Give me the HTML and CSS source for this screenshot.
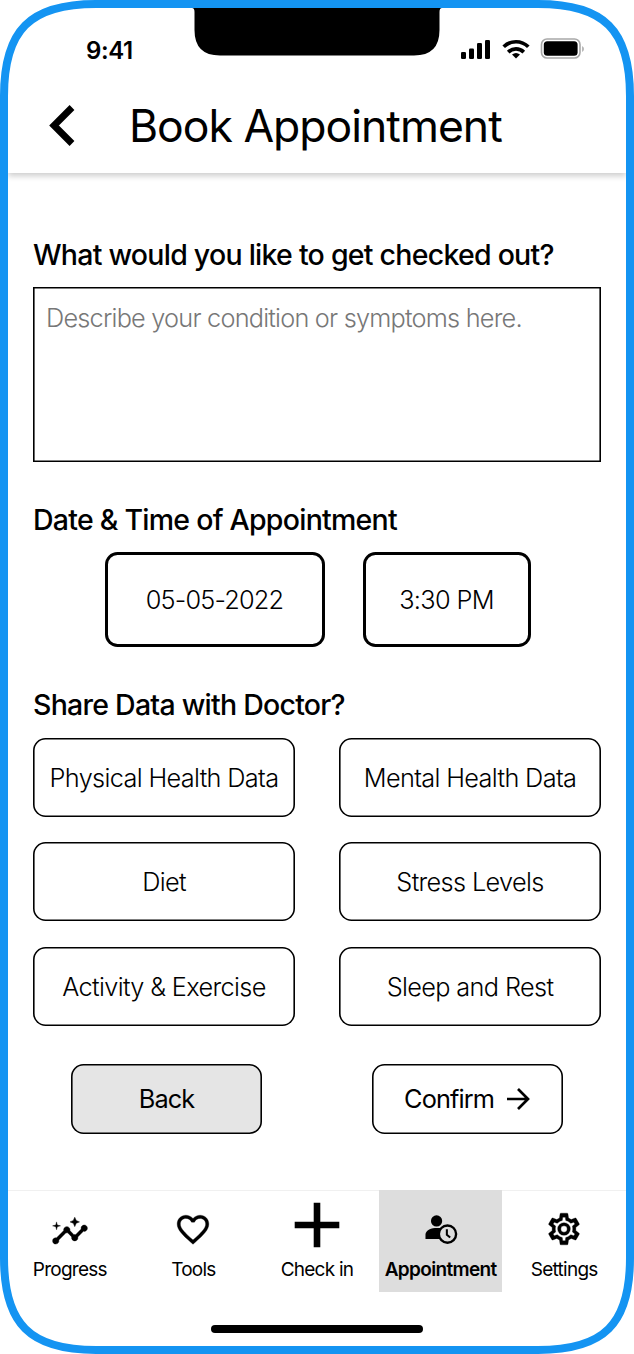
FILE: index.html
```html
<!DOCTYPE html>
<html lang="en">
<head>
<meta charset="utf-8">
<title>Book Appointment</title>
<link rel="stylesheet" href="styles.css">
</head>
<body>
<div class="phone">
  <header class="top">
    <div class="status">
      <span class="clock">9:41</span>
      <svg class="notch" width="250" height="48" viewBox="0 0 250 48"><path d="M0 0H250Q247.500 0 247.500 4V22Q247.500 47.500 222 47.500H28Q2.500 47.500 2.500 22V4Q2.500 0 0 0Z"/></svg>
      <svg class="signals" width="124" height="22" viewBox="0 0 124 22">
        <rect x="0" y="14" width="5" height="7" rx="1.300"/><rect x="8" y="10.500" width="5" height="10.500" rx="1.300"/><rect x="16" y="5" width="5" height="16" rx="1.300"/><rect x="24" y="2" width="5" height="19" rx="1.300"/>
        <g fill="none" stroke="#000" stroke-width="3.700"><path d="M42.700 8.800a17.500 17.500 0 0 1 24.600 0M47.200 14.100a11.200 11.200 0 0 1 15.600 0"/></g>
        <path d="M55 20.500L51 16.500Q55 13.400 59 16.500Z"/>
        <rect x="80.500" y="1" width="38.500" height="19" rx="5.500" fill="none" stroke="#a8a8a8" stroke-width="1.600"/><rect x="82.800" y="3.200" width="33.800" height="14.600" rx="3.500"/><path d="M121.200 8V14Q122.900 13 122.900 11T121.200 8" fill="#a8a8a8"/>
      </svg>
    </div>
    <div class="title-row">
      <svg class="back" width="26" height="42" viewBox="0 0 26 42"><path d="M23 2.500L5 20.500L23 38.500" fill="none" stroke="#000" stroke-width="6.800"/></svg>
      <h1>Book Appointment</h1>
    </div>
  </header>
  <main>
    <section class="reason"><h2>What would you like to get checked out?</h2><textarea placeholder="Describe your condition or symptoms here."></textarea></section>
    <section class="when"><h2>Date &amp; Time of Appointment</h2><div class="pickers"><button class="date">05-05-2022</button><button class="time">3:30 PM</button></div></section>
    <section class="share"><h2>Share Data with Doctor?</h2>
      <div class="choices"><button>Physical Health Data</button><button>Mental Health Data</button><button>Diet</button><button>Stress Levels</button><button>Activity &amp; Exercise</button><button>Sleep and Rest</button></div>
    </section>
    <div class="actions"><button class="prev">Back</button><button class="confirm"><span>Confirm</span><svg width="24" height="24" viewBox="0 0 24 24"><path d="M0 12H21M11 2L21 12L11 22" fill="none" stroke="#000" stroke-width="2.700"/></svg></button></div>
  </main>
  <nav>
    <a><svg width="38" height="38" viewBox="0 0 24 24"><g transform="translate(0 1.500)" stroke="#000" stroke-width=".25"><path d="M21 8c-1.450 0-2.260 1.440-1.930 2.510l-3.550 3.560c-.3-.09-.74-.09-1.040 0l-2.550-2.550C12.270 10.450 11.460 9 10 9c-1.450 0-2.270 1.440-1.930 2.520l-4.560 4.550C2.440 15.740 1 16.550 1 18c0 1.100.9 2 2 2 1.450 0 2.260-1.440 1.930-2.510l4.550-4.560c.3.09.74.09 1.040 0l2.550 2.550C12.730 16.550 13.540 18 15 18c1.450 0 2.270-1.440 1.930-2.520l3.560-3.550C21.560 12.260 23 11.450 23 10c0-1.100-.9-2-2-2z"/><path d="M15 9l.94-2.070L18 6l-2.060-.93L15 3l-.92 2.070L12 6l2.080.93zM3.500 11L4 9l2-.5L4 8l-.5-2L3 8l-2 .5L3 9z"/></g></svg><span>Progress</span></a>
    <a><svg width="38" height="38" viewBox="0 0 24 24"><path transform="translate(0 .3)" stroke="#000" stroke-width=".2" d="M16.500 3c-1.740 0-3.410.81-4.500 2.090C10.910 3.810 9.240 3 7.500 3 4.420 3 2 5.420 2 8.500c0 3.780 3.400 6.860 8.550 11.540L12 21.350l1.450-1.320C18.600 15.360 22 12.280 22 8.500 22 5.420 19.580 3 16.500 3zm-4.400 15.550l-.1.100-.1-.1C7.140 14.240 4 11.390 4 8.500 4 6.500 5.500 5 7.500 5c1.540 0 3.040.99 3.570 2.360h1.870C13.460 5.990 14.960 5 16.500 5c2 0 3.500 1.500 3.500 3.500 0 2.890-3.140 5.740-7.900 10.050z"/></svg><span>Tools</span></a>
    <a><svg class="plus" width="46" height="46" viewBox="0 0 46 46"><path d="M19.700 .7h6.600v19h19v6.600h-19v19h-6.600v-19h-19v-6.600h19z"/></svg><span>Check in</span></a>
    <a class="active"><svg width="38" height="38" viewBox="0 0 24 24"><circle cx="9.200" cy="6.900" r="3.550"/><path d="M2.200 18.300V15.700C2.200 12.600 6 11.400 9.500 11.400H13V18.300Z"/><circle cx="16.100" cy="15.200" r="5.450" fill="#ddd" stroke="#000" stroke-width="1.500"/><path d="M15.700 12.200v3.500l2.100 1.700" fill="none" stroke="#000" stroke-width="1.300"/></svg><span>Appointment</span></a>
    <a><svg width="38" height="38" viewBox="0 0 24 24"><path stroke="#000" stroke-width=".2" d="M19.430 12.980c.04-.32.070-.64.070-.98s-.03-.66-.07-.98l2.110-1.650c.19-.15.240-.42.120-.64l-2-3.460c-.12-.22-.39-.3-.61-.22l-2.490 1c-.52-.4-1.080-.73-1.690-.98l-.38-2.650C14.460 2.180 14.250 2 14 2h-4c-.25 0-.46.180-.49.420l-.38 2.650c-.61.250-1.170.59-1.690.98l-2.490-1c-.23-.09-.49 0-.61.220l-2 3.460c-.13.220-.07.490.120.640l2.110 1.650c-.04.320-.07.650-.07.980s.03.660.070.980l-2.110 1.650c-.19.150-.24.420-.12.640l2 3.460c.12.220.39.300.61.220l2.490-1c.52.400 1.080.730 1.690.980l.38 2.650c.03.240.24.420.49.420h4c.25 0 .46-.18.490-.42l.38-2.650c.61-.25 1.170-.59 1.690-.98l2.490 1c.23.090.49 0 .61-.22l2-3.460c.12-.22.070-.49-.12-.64l-2.110-1.650zm-1.980-1.710c.04.310.05.520.05.730s-.02.430-.05.730l-.14 1.130 1.590 1.240-.7 1.210-1.870-.75-.92.700c-.43.320-.84.560-1.250.730l-1.060.43-.29 2.050h-1.620l-.28-2.050-1.060-.43c-.43-.18-.83-.41-1.230-.71l-.91-.7-1.890.730-.7-1.210 1.590-1.240-.14-1.130c-.03-.31-.05-.54-.05-.74s.02-.43.050-.73l.14-1.130-1.590-1.240.7-1.210 1.870.750.920-.7c.43-.32.840-.56 1.250-.73l1.060-.43.290-2.050h1.620l.28 2.050 1.060.43c.43.180.83.410 1.230.710l.91.700 1.890-.75.700 1.210-1.590 1.260zM12 8a4 4 0 1 0 0 8 4 4 0 0 0 0-8zm0 6a2 2 0 1 1 0-4 2 2 0 0 1 0 4z"/></svg><span>Settings</span></a>
  </nav>
  <div class="home"></div>
  <svg class="frame" width="634" height="1354" viewBox="0 0 634 1354"><path d="M4 96C4 30 30 4 96 4H538C604 4 630 30 630 96V1258C630 1324 604 1350 538 1350H96C30 1350 4 1324 4 1258Z"/></svg>
</div>
</body>
</html>
```
FILE: styles.css
```css
* { box-sizing: border-box; }
body { margin: 0; background: #fff; color: #000; font-family: Inter, sans-serif; }
.phone { position: relative; width: 634px; height: 1354px; padding: 8px; display: flex; flex-direction: column; overflow: hidden; }
.frame { position: absolute; inset: 0; fill: none; stroke: #1494f2; stroke-width: 8; pointer-events: none; }
h1, h2 { margin: 0; }
.top { height: 165px; flex: none; box-shadow: 0 3px 6px rgba(0,0,0,.2); clip-path: inset(0 0 -14px 0); }
.status { height: 80px; display: grid; grid-template-columns: 184px 250px 184px; align-items: start; }
.clock { padding: 28px 0 0 78px; font-size: 24px; line-height: 30px; font-weight: 600; letter-spacing: -.4px; }
.signals { margin: 30px 0 0 19px; }
.title-row { display: flex; align-items: center; height: 76px; padding-left: 41px; }
.title-row h1 { margin-left: 54px; font-size: 44.500px; line-height: 54px; font-weight: 400; letter-spacing: -1px; white-space: nowrap; }
main { flex: none; width: 568px; margin-left: 25px; height: 1017px; padding-top: 65px; }
h2 { font-size: 28.500px; line-height: 34px; font-weight: 500; letter-spacing: -.75px; white-space: nowrap; }
textarea { display: block; width: 568px; height: 174.500px; margin-top: 15px; padding: 14.500px 13px; border: 0; box-shadow: inset 0 0 0 1.600px #000; border-radius: 0; resize: none; font: 300 25.300px/31px Inter, sans-serif; letter-spacing: -.78px; }
textarea::placeholder { color: #777; opacity: 1; }
.when { margin-top: 41.500px; }
.pickers { display: flex; gap: 38px; padding-left: 71px; margin-top: 15px; }
button { display: flex; align-items: center; justify-content: center; padding: 0; background: #fff; color: #000; border: 0; box-shadow: inset 0 0 0 1.600px #000; border-radius: 12.500px; font: 300 25.300px/31px Inter, sans-serif; letter-spacing: -.65px; white-space: nowrap; }
.date, .time { height: 95px; box-shadow: inset 0 0 0 3px #000; }
.date { width: 220px; letter-spacing: -.8px; }
.time { width: 168px; }
.pickers { padding-left: 71.500px; }
.share { margin-top: 41px; }
.choices { margin-top: 15px; padding-top: .500px; display: grid; grid-template-columns: 262px 262px; column-gap: 44px; grid-auto-rows: 79px; row-gap: 25.700px; }
.actions { display: flex; gap: 110px; padding-left: 38px; margin-top: 38px; }
.actions button { width: 191px; height: 70px; font-weight: 400; letter-spacing: -.9px; }
.actions .prev { background: #e5e5e5; }
.confirm svg { margin-left: 13px; }
nav { height: 102px; flex: none; display: grid; grid-template-columns: repeat(5, 1fr); border-top: 1px solid #f0f0f0; }
nav a { display: flex; flex-direction: column; align-items: center; padding-top: 19px; font-size: 19px; line-height: 24px; letter-spacing: -.75px; white-space: nowrap; }
nav a span { margin-top: 10px; }
nav .plus { margin: -8px 0 0; }
nav .active { background: #ddd; font-weight: 600; margin-top: -1px; padding-top: 20px; letter-spacing: -.65px; }
.home { width: 212px; height: 8px; flex: none; border-radius: 4px; background: #000; margin: 33px auto 0; }
```
